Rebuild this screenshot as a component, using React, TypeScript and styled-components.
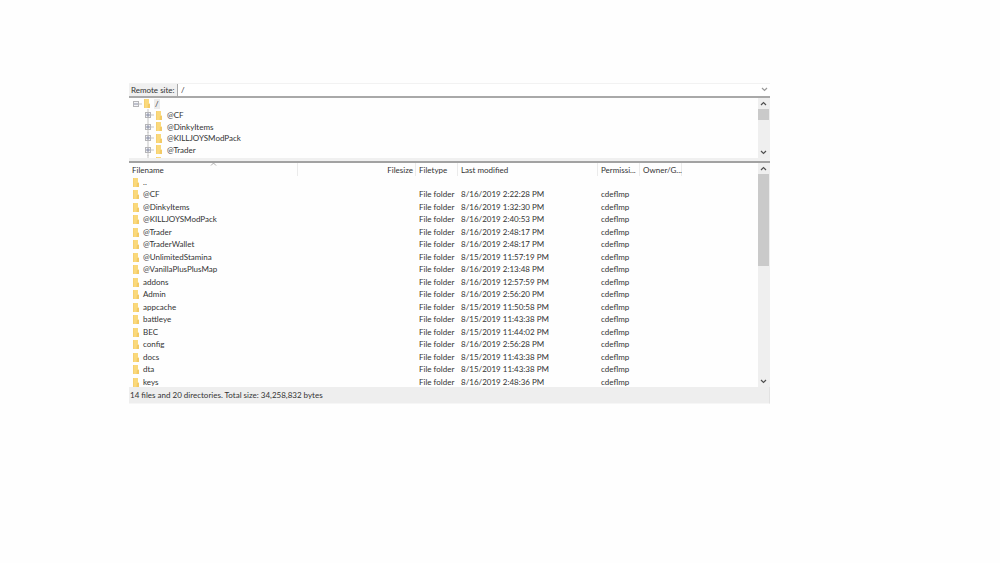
import React from "react";
import styled, { createGlobalStyle } from "styled-components";

const GlobalStyle = createGlobalStyle`
  * { box-sizing: border-box; }
  body {
    margin: 0;
    background: #fefefe;
    color: #333;
    font-family: Lato, "Open Sans", sans-serif;
    font-size: 8px;
    line-height: 12px;
  }
`;

const Page = styled.div`
  padding: 83px 230px 0 129px;
`;

const Panel = styled.main`
  display: flex;
  flex-direction: column;
`;

const SiteBar = styled.div`
  display: flex;
  height: 15px;
  border-top: 1px solid #f2f2f2;
  border-bottom: 2px solid #a9a9a9;
  background: #fff;
`;

const SiteLabel = styled.label`
  width: 49px;
  padding-left: 2px;
  background: #f0f0f0;
  border-right: 1px solid #a8a8a8;
  white-space: nowrap;
`;

const SiteInput = styled.input`
  flex: 1;
  min-width: 0;
  padding: 0 3px;
  border: 0;
  outline: 0;
  background: transparent;
  color: inherit;
  font: inherit;
`;

const IconButton = styled.button`
  display: flex;
  align-items: center;
  justify-content: center;
  width: 11px;
  height: 11px;
  padding: 0;
  border: 0;
  background: transparent;
`;

const Pane = styled.section<{ $height: number }>`
  display: flex;
  height: ${(p) => p.$height}px;
  overflow: hidden;
  background: #fefefe;
`;

const Tree = styled.ul`
  flex: 1;
  margin: 0;
  padding: 0 0 0 2px;
  list-style: none;
`;

const TreeRow = styled.li<{ $nested?: boolean }>`
  display: flex;
  align-items: center;
  height: 11px;
  padding-left: ${(p) => (p.$nested ? 12 : 0)}px;
  &:nth-child(even) { height: 12px; }
`;

const TreeLabel = styled.span<{ $selected?: boolean }>`
  margin-left: 3px;
  padding: 0 1px;
  line-height: 10px;
  background: ${(p) => (p.$selected ? "#ececec" : "transparent")};
`;

const Divider = styled.div`
  height: 5px;
  border-bottom: 2px solid #a2a2a2;
  background: #f0f0f0;
`;

const List = styled.div`
  flex: 1;
  min-width: 0;
`;

const Table = styled.table`
  width: 100%;
  table-layout: fixed;
  border-collapse: separate;
  border-spacing: 0;
`;

const Col = styled.col<{ $width?: number }>`
  width: ${(p) => (p.$width ? `${p.$width}px` : "auto")};
`;

const HeadCell = styled.th<{ $align?: string }>`
  position: relative;
  height: 13px;
  padding: 0 2px 0 3px;
  border-right: 1px solid #ebebeb;
  font-weight: 400;
  text-align: ${(p) => p.$align || "left"};
  white-space: nowrap;
  &:last-child { border-right: 0; }
`;

const SortMark = styled.svg`
  position: absolute;
  top: -1px;
  left: 48%;
`;

const Row = styled.tr`
  height: 12px;
  &:nth-child(even) { height: 13px; }
`;

const Cell = styled.td`
  padding: 0 0 0 3px;
  line-height: 11px;
  white-space: nowrap;
`;

const NameCell = styled.div`
  display: flex;
  align-items: center;
  gap: 3px;
`;

const Track = styled.div`
  display: flex;
  flex-direction: column;
  width: 12px;
  background: #efefef;
`;

const Thumb = styled.div<{ $height: number }>`
  height: ${(p) => p.$height}px;
  margin-right: 1px;
  background: #cacaca;
`;

const Spacer = styled.div`
  flex: 1;
`;

const StatusBar = styled.footer`
  height: 17px;
  padding: 2px 1px;
  background: #eee;
  border-right: 1px solid #e2e2e2;
  border-bottom: 1px solid #f6f6f6;
`;

const Chevron = ({ up = false, color = "#505050" }: { up?: boolean; color?: string }) => (
  <svg width="7" height="5" viewBox="0 0 7 5" aria-hidden="true">
    <path d={up ? "M1 4 3.5 1.5 6 4" : "M1 1 3.5 3.5 6 1"} fill="none" stroke={color} strokeWidth="1.2" />
  </svg>
);

const Folder = () => (
  <svg width="8" height="9" viewBox="0 0 8 9" aria-hidden="true">
    <path d="M1 0h5v4l1 1v4H1z" fill="#fad97c" />
    <path d="M1 0h1v9H1z" fill="#f6d070" />
    <path d="M5 5h2v4H4.500z" fill="#f3ca66" />
  </svg>
);

const Expander = ({ open = false }: { open?: boolean }) => (
  <svg width="12" height="12" viewBox="0 0 12 12" aria-hidden="true">
    <path d={open ? "M8 6h3" : "M5 0v3M5 9v3M8 6h3"} stroke="#c4c4c4" />
    <rect x="2.500" y="3.500" width="5" height="5" fill="#f4f4f6" stroke="#b5b5b8" />
    <path d={open ? "M3 6h4" : "M3 6h4M5 4v4"} stroke="#7d859c" strokeWidth=".9" />
  </svg>
);

const ScrollBar = ({ thumb }: { thumb: number }) => (
  <Track>
    <IconButton type="button" aria-label="Scroll up"><Chevron up /></IconButton>
    <Thumb $height={thumb} />
    <Spacer />
    <IconButton type="button" aria-label="Scroll down"><Chevron /></IconButton>
  </Track>
);

const treeItems = ["@CF", "@DinkyItems", "@KILLJOYSModPack", "@Trader"];

const files: [string, string][] = [
  ["@CF", "8/16/2019 2:22:28 PM"],
  ["@DinkyItems", "8/16/2019 1:32:30 PM"],
  ["@KILLJOYSModPack", "8/16/2019 2:40:53 PM"],
  ["@Trader", "8/16/2019 2:48:17 PM"],
  ["@TraderWallet", "8/16/2019 2:48:17 PM"],
  ["@UnlimitedStamina", "8/15/2019 11:57:19 PM"],
  ["@VanillaPlusPlusMap", "8/16/2019 2:13:48 PM"],
  ["addons", "8/16/2019 12:57:59 PM"],
  ["Admin", "8/16/2019 2:56:20 PM"],
  ["appcache", "8/15/2019 11:50:58 PM"],
  ["battleye", "8/15/2019 11:43:38 PM"],
  ["BEC", "8/15/2019 11:44:02 PM"],
  ["config", "8/16/2019 2:56:28 PM"],
  ["docs", "8/15/2019 11:43:38 PM"],
  ["dta", "8/15/2019 11:43:38 PM"],
  ["keys", "8/16/2019 2:48:36 PM"],
];

export default function App() {
  return (
    <Page>
      <GlobalStyle />
      <Panel>
        <SiteBar>
          <SiteLabel htmlFor="remote-site">Remote site:</SiteLabel>
          <SiteInput id="remote-site" defaultValue="/" />
          <IconButton type="button" aria-label="Show recent paths"><Chevron color="#999" /></IconButton>
        </SiteBar>
        <Pane $height={60}>
          <Tree>
            <TreeRow><Expander open /><Folder /><TreeLabel $selected>/</TreeLabel></TreeRow>
            {treeItems.map((name) => (
              <TreeRow key={name} $nested><Expander /><Folder /><TreeLabel>{name}</TreeLabel></TreeRow>
            ))}
            <TreeRow $nested><Expander /><Folder /></TreeRow>
          </Tree>
          <ScrollBar thumb={11} />
        </Pane>
        <Divider />
        <Pane $height={224}>
          <List>
            <Table>
              <colgroup>
                <Col $width={169} /><Col $width={118} /><Col $width={42} /><Col $width={140} />
                <Col $width={42} /><Col $width={42} /><Col />
              </colgroup>
              <thead>
                <tr>
                  <HeadCell>
                    Filename
                    <SortMark width="7" height="4" viewBox="0 0 7 4" aria-hidden="true">
                      <path d="M1 3.500 3.500 1 6 3.500" fill="none" stroke="#999" strokeWidth=".8" />
                    </SortMark>
                  </HeadCell>
                  <HeadCell $align="right">Filesize</HeadCell>
                  <HeadCell>Filetype</HeadCell>
                  <HeadCell>Last modified</HeadCell>
                  <HeadCell>Permissi...</HeadCell>
                  <HeadCell>Owner/G...</HeadCell>
                  <HeadCell />
                </tr>
              </thead>
              <tbody>
                <Row><Cell colSpan={7}><NameCell><Folder />..</NameCell></Cell></Row>
                {files.map(([name, modified]) => (
                  <Row key={name}>
                    <Cell><NameCell><Folder />{name}</NameCell></Cell>
                    <Cell />
                    <Cell>File folder</Cell>
                    <Cell>{modified}</Cell>
                    <Cell>cdeflmp</Cell>
                    <Cell />
                    <Cell />
                  </Row>
                ))}
              </tbody>
            </Table>
          </List>
          <ScrollBar thumb={92} />
        </Pane>
        <StatusBar>14 files and 20 directories. Total size: 34,258,832 bytes</StatusBar>
      </Panel>
    </Page>
  );
}
